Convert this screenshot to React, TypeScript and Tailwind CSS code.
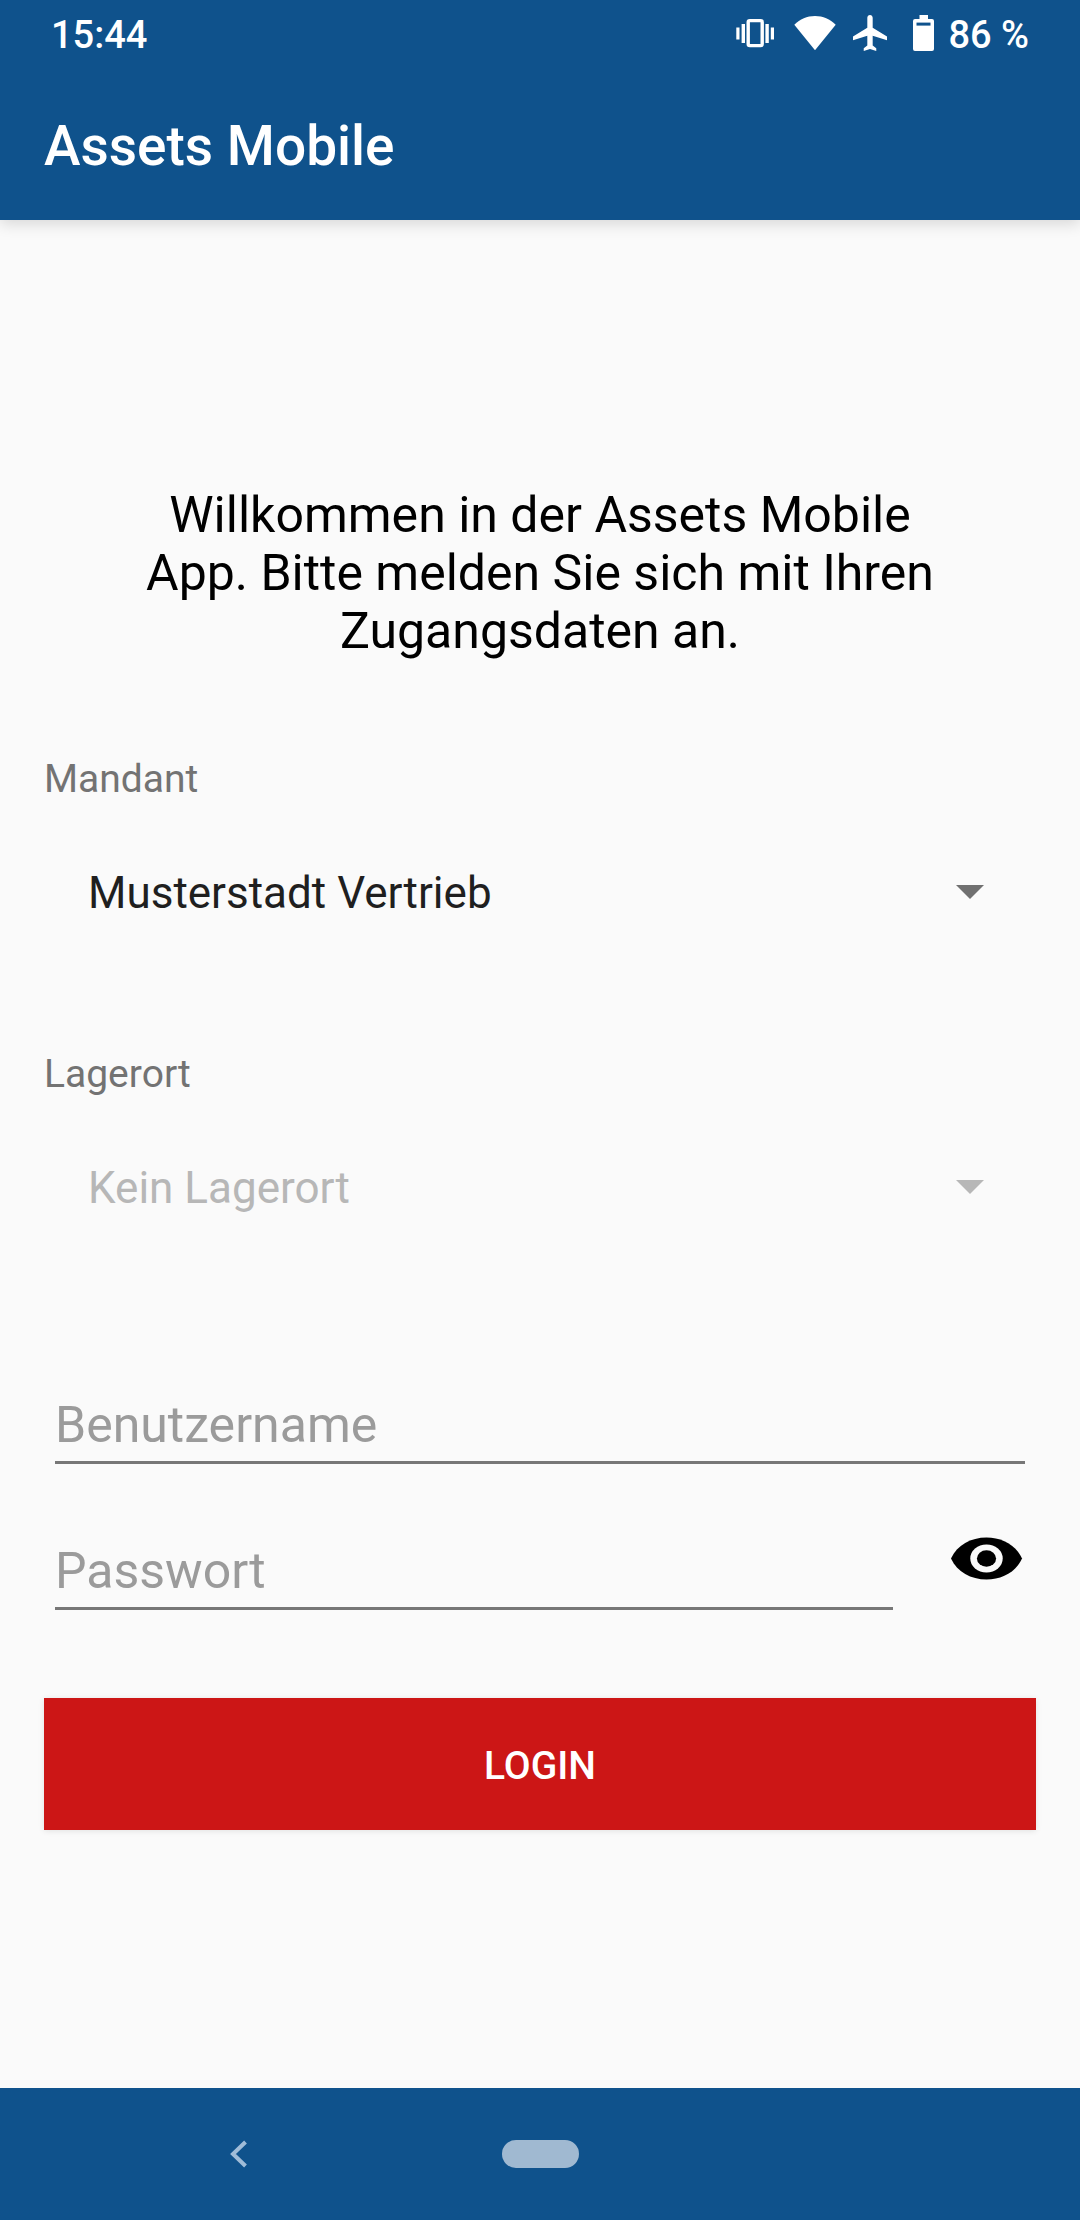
import { useState } from "react";
import type { ReactNode } from "react";

function VibrateIcon() {
  return (
    <svg width="38" height="30" viewBox="0 0 38 30" fill="none" aria-hidden="true">
      <rect x="12.2" y="2.6" width="14" height="25" rx="1.6" stroke="white" strokeWidth="3.4" />
      <path d="M0.3 9.5h3.2v12H0.3zM5.6 6h3.4v19H5.6zM29.4 6h3.4v19h-3.4zM34.8 9.5H38v12h-3.2z" fill="white" />
    </svg>
  );
}

function WifiIcon() {
  return (
    <svg width="42" height="36" viewBox="0 0 42 36" fill="white" aria-hidden="true">
      <path d="M21 35.2 0.3 9.8C6 4 13 1 21 1s15 3 20.7 8.8z" />
    </svg>
  );
}

function AirplaneIcon() {
  return (
    <svg width="34" height="36" viewBox="2 2 19 20" fill="white" aria-hidden="true">
      <path d="M21 16v-2l-8-5V3.500c0-.83-.67-1.5-1.500-1.500S10 2.670 10 3.500V9l-8 5v2l8-2.500V19l-2 1.500V22l3.500-1 3.500 1v-1.500L13 19v-5.500l8 2.500z" />
    </svg>
  );
}

function BatteryIcon() {
  return (
    <svg width="21" height="36" viewBox="0 0 21 36" aria-hidden="true">
      <path d="M6.500 0h8.500v4h4a2 2 0 0 1 2 2v28a2 2 0 0 1-2 2H2a2 2 0 0 1-2-2V6a2 2 0 0 1 2-2h4.500z" fill="white" />
      <rect x="3.500" y="7.600" width="14" height="3" fill="#0f528c" />
    </svg>
  );
}

function StatusBar() {
  return (
    <div className="flex h-[66px] items-center justify-between px-[51px] text-[38px] leading-[44px]">
      <span className="pt-1 font-medium">15:44</span>
      <div className="flex items-center">
        <VibrateIcon />
        <span className="ml-5">
          <WifiIcon />
        </span>
        <span className="ml-[17px]">
          <AirplaneIcon />
        </span>
        <span className="mr-3.5 ml-[26px]">
          <BatteryIcon />
        </span>
        <span className="pt-1 font-medium">86 %</span>
      </div>
    </div>
  );
}

function SelectField({ id, label, disabled, children }: { id: string; label: string; disabled?: boolean; children: ReactNode }) {
  return (
    <div>
      <label htmlFor={id} className="block text-[39px] leading-[46px] text-[#737373]">
        {label}
      </label>
      <div className="relative mt-6">
        <select
          id={id}
          disabled={disabled}
          className="block h-[132px] w-full appearance-none bg-transparent pt-0.5 pr-28 pl-11 text-[44px] leading-[52px] text-[#1f1f1f] opacity-100 outline-none disabled:text-[#b7b7b7]"
        >
          {children}
        </select>
        <svg
          className={
            disabled
              ? "pointer-events-none absolute top-[59px] right-[52px] text-[#b7b7b7]"
              : "pointer-events-none absolute top-[59px] right-[52px] text-[#707070]"
          }
          width="28"
          height="14"
          viewBox="0 0 28 14"
          fill="currentColor"
          aria-hidden="true"
        >
          <path d="M0 0h28L14 14z" />
        </svg>
      </div>
    </div>
  );
}

const inputClass =
  "block w-full min-w-0 border-b-[3px] border-[#777777] bg-transparent pb-[7px] text-[50px] leading-[58px] h-[68px] text-black outline-none placeholder:text-[#9b9b9b] placeholder:opacity-100";

export default function App() {
  const [visible, setVisible] = useState(false);

  return (
    <div className="flex min-h-screen flex-col bg-[#fafafa] font-['Roboto',sans-serif]">
      <header className="bg-[#0f528c] text-white shadow-[0_4px_14px_rgba(0,0,0,0.14)]">
        <StatusBar />
        <h1 className="px-11 pt-12 pb-[42px] text-[55px] leading-[64px] font-medium">Assets Mobile</h1>
      </header>

      <main className="flex-1 px-11 pt-[266px] pb-16">
        <p className="px-[88px] text-center text-[50px] leading-[58px] text-black">
          Willkommen in der Assets Mobile App. Bitte melden Sie sich mit Ihren Zugangsdaten an.
        </p>

        <form className="mt-24" onSubmit={(e) => e.preventDefault()}>
          <div className="flex flex-col gap-[93px]">
            <SelectField id="mandant" label="Mandant">
              <option>Musterstadt Vertrieb</option>
            </SelectField>
            <SelectField id="lagerort" label="Lagerort" disabled>
              <option>Kein Lagerort</option>
            </SelectField>
          </div>

          <div className="mt-[143px] px-[11px]">
            <input type="text" aria-label="Benutzername" placeholder="Benutzername" className={inputClass} />
            <div className="mt-[61px] flex items-end gap-[55px]">
              <input
                type={visible ? "text" : "password"}
                aria-label="Passwort"
                placeholder="Passwort"
                className={inputClass}
              />
              <button
                type="button"
                aria-label="Passwort anzeigen"
                aria-pressed={visible}
                onClick={() => setVisible(!visible)}
                className="mb-[18px] shrink-0"
              >
                <svg width="77" height="67" viewBox="0 0 77 67" aria-hidden="true">
                  <path d="M3 33.500C9 20 23 12.500 38.500 12.500S68 20 74 33.500C68 47 54 54.500 38.500 54.500S9 47 3 33.500z" fill="black" />
                  <ellipse cx="38.500" cy="33.500" rx="16.200" ry="14" fill="#fafafa" />
                  <ellipse cx="38.500" cy="33.500" rx="9.600" ry="8.300" fill="black" />
                </svg>
              </button>
            </div>
          </div>

          <button
            type="submit"
            className="mt-[88px] block h-[132px] w-full bg-[#cc1616] pt-1 text-[39px] leading-[46px] font-medium text-white shadow-[0_1px_6px_rgba(0,0,0,0.1)]"
          >
            LOGIN
          </button>
        </form>
      </main>

      <nav className="grid h-[132px] grid-cols-[1fr_auto_1fr] items-center bg-[#0f528c]">
        <button type="button" aria-label="Zurück" className="mr-6 justify-self-center p-3">
          <svg width="18" height="28" viewBox="0 0 18 28" fill="none" aria-hidden="true">
            <path d="M15.500 2 3 14l12.500 12" stroke="#a0bcd8" strokeWidth="4" />
          </svg>
        </button>
        <button type="button" aria-label="Startbildschirm" className="h-7 w-[77px] rounded-full bg-[#a0b9d1]" />
      </nav>
    </div>
  );
}
